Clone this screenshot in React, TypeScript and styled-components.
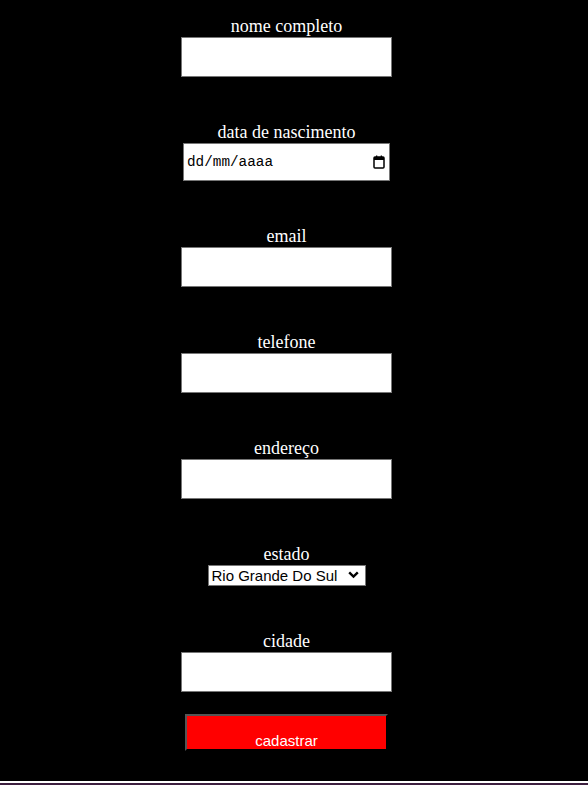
import React from "react";
import styled, { createGlobalStyle } from "styled-components";

const Global = createGlobalStyle`
  html { background: #3d1f3f; }
  body { margin: 0; background: transparent; }
  * { box-sizing: border-box; }
`;

const Page = styled.div`
  background: #000;
  border-bottom: 2px solid #fff;
  padding: 16px 15px 30px 0;
`;

const Form = styled.form`
  display: flex;
  flex-direction: column;
  align-items: center;
  margin: 0;
`;

const Group = styled.div<{ $gap?: number }>`
  display: flex;
  flex-direction: column;
  align-items: center;
  margin-bottom: ${(p) => (p.$gap ?? 45)}px;
`;

const Label = styled.label`
  display: block;
  color: #fff;
  font-family: "Liberation Serif", "Times New Roman", serif;
  font-size: 18px;
  line-height: 21px;
  height: 21px;
`;

const TextInput = styled.input`
  width: 211px;
  height: 40px;
  border: 1px solid #767676;
  background: #fff;
  margin: 0;
  padding: 1px 4px;
  font-family: "Liberation Sans", Arial, sans-serif;
  font-size: 15px;
`;

const DateField = styled.div`
  width: 207px;
  height: 38px;
  border: 1px solid #767676;
  background: #fff;
  display: flex;
  align-items: center;
  justify-content: space-between;
  padding: 0 4px 0 3px;
  font-family: "Liberation Mono", "DejaVu Sans Mono", monospace;
  font-size: 14.33px;
  color: #000;
`;

const SelectWrap = styled.div`
  position: relative;
  width: 158px;
  height: 21px;
`;

const Select = styled.select`
  appearance: none;
  width: 158px;
  height: 21px;
  border: 1px solid #767676;
  border-radius: 0;
  background: #fff;
  color: #000;
  margin: 0;
  padding: 0 20px 0 3px;
  font-family: "Liberation Sans", Arial, sans-serif;
  font-size: 15px;
  line-height: 19px;
`;

const Chevron = styled.svg`
  position: absolute;
  right: 7px;
  top: 6px;
  pointer-events: none;
`;

const Button = styled.button`
  width: 203px;
  height: 37px;
  margin: 22px 0 0;
  background: #ff0000;
  border-style: solid;
  border-width: 2px;
  border-color: #555 #000 #000 #555;
  color: #fff;
  font-family: "Liberation Sans", Arial, sans-serif;
  font-size: 15px;
  display: flex;
  justify-content: center;
  align-items: flex-end;
  padding: 0;
  line-height: 17px;
`;

const fields = ["nome completo"];

export default function App() {
  return (
    <>
      <Global />
      <Page>
        <Form onSubmit={(e) => e.preventDefault()}>
          {fields.map((f) => (
            <Group key={f}>
              <Label>{f}</Label>
              <TextInput type="text" />
            </Group>
          ))}
          <Group>
            <Label>data de nascimento</Label>
            <DateField>
              <span>dd/mm/aaaa</span>
              <svg width="12" height="14" viewBox="0 0 12 14">
                <rect x="1" y="2" width="10" height="11" rx="1" fill="none" stroke="#000" strokeWidth="1.5" />
                <rect x="1" y="2" width="10" height="3" fill="#000" />
                <rect x="3" y="0.5" width="1.3" height="2.5" fill="#000" />
                <rect x="7.7" y="0.5" width="1.3" height="2.5" fill="#000" />
              </svg>
            </DateField>
          </Group>
          <Group>
            <Label>email</Label>
            <TextInput type="email" />
          </Group>
          <Group>
            <Label>telefone</Label>
            <TextInput type="tel" />
          </Group>
          <Group>
            <Label>endereço</Label>
            <TextInput type="text" />
          </Group>
          <Group>
            <Label>estado</Label>
            <SelectWrap>
              <Select defaultValue="RS">
                <option value="RS">Rio Grande Do Sul</option>
              </Select>
              <Chevron width="11" height="8" viewBox="0 0 11 8">
                <path d="M1.2 1.3 L5.5 5.6 L9.8 1.3" fill="none" stroke="#000" strokeWidth="2.4" />
              </Chevron>
            </SelectWrap>
          </Group>
          <Group $gap={0}>
            <Label>cidade</Label>
            <TextInput type="text" />
          </Group>
          <Button type="submit">cadastrar</Button>
        </Form>
      </Page>
    </>
  );
}
